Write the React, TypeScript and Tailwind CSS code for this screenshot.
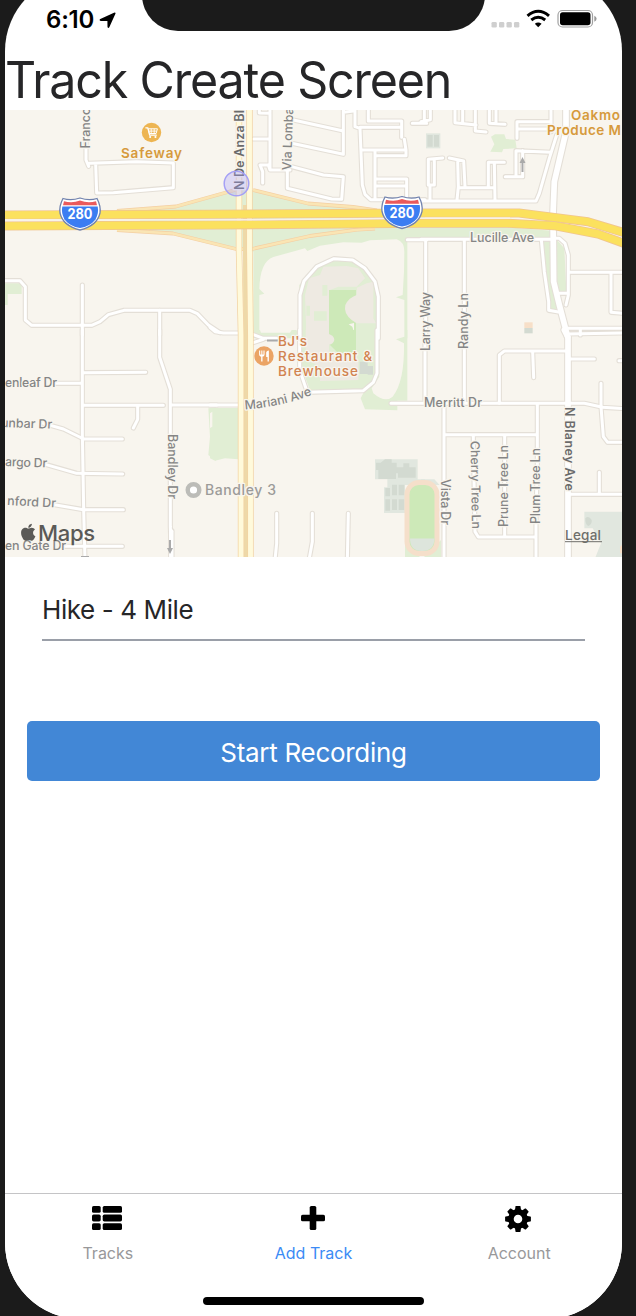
import React from "react";
import { FaApple } from "react-icons/fa";
import { MdRestaurant } from "react-icons/md";

type Shape = { t: keyof typeof TILES; d: string; w?: number; c?: string };

/* Map tiles: every shape is given in the units of its own tile. */
const TILES = {
  A: "translate(0 105) scale(0.33333)",
  B: "translate(210 105) scale(0.33333)",
  C: "translate(421 105) scale(0.33333)",
  D: "translate(0 330) scale(0.33333)",
  E: "translate(210 330) scale(0.33333)",
  F: "translate(421 330) scale(0.33333)",
};

const LAND = "#f8f5ee";
const GREEN = "#e1eed4";
const PITCH = "#cde9b8";
const STONE = "#eeeae2";
const COURT = "#e1e7df";
const COURT_DARK = "#d3dad1";

const areas: Shape[] = [
  { t: "A", c: GREEN, d: "M15 535H65V567H23V600H15Z" },
  { t: "A", c: GREEN, d: "M420 318L530 306L650 274V418L520 385L420 376Z" },
  { t: "B", c: GREEN, d: "M0 275L80 255H130L295 296L430 306L500 316H645V400H592V700H130V440L80 432L0 410Z" },
  { t: "B", c: LAND, d: "M148 684V570L163 566L148 552Q150 470 190 456L285 430L292 438L330 422L400 412L455 413L480 406L560 403Q583 410 583 440L582 500L578 570L558 577L583 585V705H500V560L430 465L370 460L320 480L268 540V675L240 684Z" },
  { t: "B", c: GREEN, d: "M268 700V570L282 528L320 485L372 461L428 465L465 490L495 530L507 575V700Z" },
  { t: "B", c: STONE, d: "M288 700V655L285 570L297 520L330 510L340 485L410 483L445 490L465 520L440 545H385L360 555V690Z" },
  { t: "B", c: GREEN, d: "M337 540H352V572H337ZM312 619H350V647H312ZM289 602H300V632H289Z" },
  { t: "B", c: PITCH, d: "M357 555H438V700H357Z" },
  { t: "B", c: STONE, d: "M441 548L470 535L490 530V640L498 655H440L425 645Q400 625 406 600Q416 578 440 570Z" },
  { t: "B", c: LAND, d: "M416 658L432 654V682L427 665Z" },
  { t: "C", c: GREEN, d: "M0 366H250L400 378V397H0Z" },
  { t: "C", c: GREEN, d: "M365 405H390V530L410 610L390 618L370 500Z" },
  { t: "C", c: GREEN, d: "M408 405L430 430L436 558H415L405 520Z" },
  { t: "C", c: GREEN, d: "M210 95L222 88H250L255 102L283 104L287 130L247 132L243 142L208 140L220 118Z" },
  { t: "C", c: COURT, d: "M15 85H58V130H15Z" },
  { t: "C", c: COURT_DARK, d: "M19 90H35V125H19ZM39 90H54V125H39Z" },
  { t: "C", c: "#f7dfc8", d: "M310 652H335V669H310Z" },
  { t: "C", c: COURT_DARK, d: "M310 669H335V685H310Z" },
  { t: "C", c: "#e9e2d9", d: "M440 668H610V690H440Z" },
  { t: "D", c: GREEN, d: "M625 235L648 232V393L625 375L630 320Z" },
  { t: "E", c: GREEN, d: "M0 234H85V388L45 385L15 392L0 385ZM130 0H260V12H130Z" },
  { t: "E", c: LAND, d: "M150 0H245L240 8H153ZM0 250L7 245V290L0 294Z" },
  { t: "E", c: GREEN, d: "M269 0H592V212H562V241L465 238L452 205L465 180H300L269 100Z" },
  { t: "E", c: STONE, d: "M287 0H357V65L400 70L445 90V150L330 153V108L287 90Z" },
  { t: "E", c: PITCH, d: "M357 0H438V70H385L357 42Z" },
  { t: "E", c: STONE, d: "M357 12Q373 18 373 30Q370 42 357 44Z" },
  { t: "E", c: COURT_DARK, d: "M449 95H473V132H449ZM473 108H489V134H473Z" },
  { t: "E", c: LAND, d: "M507 0H583V20L558 28L582 40Q584 155 548 200Q525 220 490 190L485 175L508 140Z" },
  { t: "E", c: COURT, d: "M495 388H623V448H645V465H585V549H522V472H532V448H495Z" },
  { t: "E", c: COURT_DARK, d: "M498 398H512L525 388H545V398H560V412H580V400H598V412H617V443H564V430H558V447H505V420H498ZM526 474H540V499H526ZM546 464H561V496H546ZM566 464H583V496H566ZM526 508H540V542H526ZM546 508H561V540H546ZM566 508H583V540H566Z" },
  { t: "E", c: GREEN, d: "M585 640L640 690H585Z" },
  { t: "F", c: COURT, d: "M0 448H40L56 465H0ZM490 545H610V690H520L540 640L515 595H490Z" },
  { t: "F", c: COURT_DARK, d: "M493 565Q503 555 512 570Q514 582 502 588Q492 584 493 565Z" },
  { t: "F", c: "#f7dfc8", d: "M597 650L610 640V670H597Z" },
  { t: "F", c: GREEN, d: "M0 690L60 630V690Z" },
];

const roads: Shape[] = [
  { t: "A", d: "M258 15V165L266 184M268 175L410 170L520 174V248L340 263L290 264L287 177" },
  { t: "A", d: "M0 527H60L76 545V645L95 661H275L300 650L325 629L372 616H570L592 626L625 660L660 683" },
  { t: "A", d: "M247 540V690M479 616V690" },
  { t: "D", d: "M247 0V310L251 540L255 690M251 128L437 127M165 160H247M251 226H490M413 226V268L400 294" },
  { t: "D", d: "M130 280L190 297L251 327H367M125 400L230 430L368 432M150 522L250 539H370M185 649H367" },
  { t: "D", d: "M479 0V82L511 178V590L514 690M511 225H650" },
  { t: "D", w: 13, d: "M514 604V690" },
  { t: "E", d: "M0 225H90" },
  { t: "B", d: "M0 667L15 680L40 684H90M180 15V190M148 15V24L180 25M130 102H180M240 195H180L175 180H150L158 200V234" },
  { t: "B", d: "M232 195V250L365 282L395 283L400 215L340 210L245 185M240 43L400 78M245 115L400 148V15M400 22L430 18" },
  { t: "B", d: "M435 15V65L450 70L457 240L465 268L482 284H645M450 67H575M475 15V48H575V97M455 135H588L583 103M588 135V152H495M495 140V280M495 222H590V284M495 243H590M607 55H650" },
  { t: "B", d: "M592 404H650M270 700V570L282 528L320 485L372 461L428 465L465 490L495 530L505 575V700" },
  { t: "E", d: "M269 0V120L292 187L460 182L490 157L501 130V0M130 14L160 25H200M130 38L160 28" },
  { t: "C", d: "M0 50L28 44V15M10 15V44M102 15V53L165 60M125 15V53M163 15V78L195 81M205 15V55L252 58M225 15V55M288 100V50H390M288 72H390M390 15V80" },
  { t: "C", d: "M407 90L385 160L365 230L355 265L345 288H0M285 215V137L390 142M305 137V215H253M27 285V240M22 163V240H40V165M22 163L65 159M85 159L128 168L132 245M110 165L112 245L108 285M112 248H220M222 285L220 172M202 245V172H250" },
  { t: "C", d: "M0 403H400M14 404V700M130 404V700M361 404L370 500L383 590V616L412 621M400 400H415L432 415L442 450V570L435 600M415 565H440M442 502H610M570 502V622L610 625M440 670H610M478 670V690" },
  { t: "F", d: "M12 0V215M130 0V215M235 220V75L250 63H435M335 65L338 143M440 87H520M594 92H610M540 160V230L547 320L560 337H610" },
  { t: "F", d: "M-90 220H490L545 232L610 236M349 222V400L345 560V690M69 230V690M69 314H349M157 314V340L162 605L172 621H345M251 314V620M448 493H610M535 427V493M440 12L610 9" },
  { t: "E", d: "M200 550V640L195 690M307 550V635L297 690M415 550L412 690" },
  { t: "C", w: 17, d: "M435 15V80L400 230L396 330L398 530L415 600L440 695" },
  { t: "F", w: 17, d: "M430 0L441 22V690" },
];

type Label = { s: string; x: number; y: number; len: number; r?: number; size?: number; c?: string; wt?: number };

const labels: Label[] = [
  { s: "Franco", x: 89.5, y: 148.5, len: 41, r: -90 },
  { s: "Via Lomba", x: 291, y: 170.5, len: 63, r: -88 },
  { s: "N De Anza Bl", x: 244, y: 190, len: 80, r: -90, wt: 600, c: "#6b6b6b" },
  { s: "Lucille Ave", x: 470, y: 242, len: 64 },
  { s: "Larry Way", x: 429.5, y: 351, len: 59, r: -90 },
  { s: "Randy Ln", x: 468, y: 349, len: 56, r: -90 },
  { s: "Merritt Dr", x: 424, y: 407, len: 58 },
  { s: "Bandley Dr", x: 167.5, y: 434, len: 65, r: 90 },
  { s: "Vista Dr", x: 440.5, y: 479, len: 46, r: 90 },
  { s: "Cherry Tree Ln", x: 470.5, y: 441, len: 88, r: 89 },
  { s: "Prune Tree Ln", x: 508, y: 527, len: 82, r: -90 },
  { s: "Plum Tree Ln", x: 540, y: 524, len: 76, r: -90 },
  { s: "N Blaney Ave", x: 565, y: 407, len: 84, r: 90, wt: 600, c: "#6b6b6b" },
  { s: "enleaf Dr", x: 5, y: 387, len: 52 },
  { s: "unbar Dr", x: 1, y: 427, len: 51, r: 2 },
  { s: "argo Dr", x: 5, y: 466, len: 42, r: 2 },
  { s: "nford Dr", x: 7, y: 505, len: 49, r: 3 },
  { s: "en Gate Dr", x: 5, y: 549.5, len: 61 },
  { s: "Bandley 3", x: 205, y: 495, len: 71, size: 14, wt: 500, c: "#9c9b99" },
  { s: "Safeway", x: 121, y: 158, len: 61, size: 13.5, wt: 600, c: "#d69a3c" },
  { s: "Oakmo", x: 571, y: 120, len: 49, size: 13.5, wt: 600, c: "#d69a3c" },
  { s: "Produce M", x: 547, y: 135, len: 74, size: 13.5, wt: 600, c: "#d69a3c" },
  { s: "BJ's", x: 278, y: 346, len: 29, size: 13.5, wt: 500, c: "#d18350" },
  { s: "Restaurant &", x: 278, y: 361, len: 94, size: 13.5, wt: 500, c: "#d18350" },
  { s: "Brewhouse", x: 278, y: 376, len: 80, size: 13.5, wt: 500, c: "#d18350" },
];

function Shield({ x, y }: { x: number; y: number }) {
  return (
    <g transform={`translate(${x} ${y})`}>
      <path d="M-17 -15.5Q-9 -13 0 -16Q9 -13 17 -15.5Q21 -8 20 -1Q17 12 0 16Q-17 12 -20 -1Q-21 -8 -17 -15.5Z" fill="#fff" stroke="#7283ae" strokeWidth="1.3" />
      <path d="M-16 -12.8Q-8 -10.500 0 -13.400Q8 -10.500 16 -12.800L17 -8.800H-17Z" fill="#ea5a5c" />
      <path d="M-17.700 -7.500H17.700Q19 -1 15.500 5.500Q10 12.500 0 14Q-10 12.500 -15.500 5.500Q-19 -1 -17.700 -7.500Z" fill="#3b7df2" />
      <text x="0" y="5.200" textAnchor="middle" textLength="25" lengthAdjust="spacingAndGlyphs" fontSize="14.500" fontWeight="700" fill="#fff">280</text>
    </g>
  );
}

function MapView() {
  const upper = "M0 215L210 214.300L421 213H519L588 221.700L630 234.500";
  const lower = "M0 226L210 225L421 223.300H508L554 225.700L598 234L630 245.500";
  const ramps = "M117 211L176 206.500L235 190M253 190L308 203.500L353 207L377 210.500M117 230L173 233.500L236 249H252L310 236L357 229.700L375 228.500";
  return (
    <svg viewBox="5 110 617 447" className="block h-[447px] w-[617px] shrink-0" fontFamily="Inter, sans-serif">
      <rect x="5" y="110" width="617" height="447" fill={LAND} />
      {areas.map((a, i) => <path key={i} transform={TILES[a.t]} d={a.d} fill={a.c} />)}
      <rect x="407" y="482.500" width="30" height="71" rx="12" fill={PITCH} stroke="#f5dfca" strokeWidth="5" />
      <path d="M410 538.500H434.500Q434 551 422 551Q410 551 410 538.500Z" fill="#dde5dc" />
      <g fill="none" strokeLinecap="round" strokeLinejoin="round">
        {roads.map((r, i) => <path key={i} transform={TILES[r.t]} d={r.d} stroke="#e4dfd7" strokeWidth={(r.w ?? 9) + 6.5} />)}
        {roads.map((r, i) => <path key={i} transform={TILES[r.t]} d={r.d} stroke="#fff" strokeWidth={r.w ?? 9} />)}
      </g>
      <g fill="none" strokeLinejoin="round">
        <path d={ramps} stroke="#f4cfa3" strokeWidth="3.800" />
        <path d={ramps} stroke="#fae5b4" strokeWidth="2.500" />
        <path d="M245.500 205V250L246.500 557" stroke="#eed9a8" strokeWidth="5" />
        <path d="M239 110V250L241 335V557M249.500 110V250L250.500 335V557" stroke="#f2d3a4" strokeWidth="6.400" />
        <path d="M239 110V250L241 335V557M249.500 110V250L250.500 335V557" stroke="#fffadb" strokeWidth="4.900" />
        <path d={upper} stroke="#f0c58f" strokeWidth="9" />
        <path d={lower} stroke="#f0c58f" strokeWidth="9" />
        <path d={upper} stroke="#fbe15e" strokeWidth="7.400" />
        <path d={lower} stroke="#fbe15e" strokeWidth="7.400" />
        <path d="M245 219.800H5M245 219.800L421 218.300H510" stroke="#f8f1e6" strokeWidth="1.600" />
      </g>
      <g fill="none" stroke="#aaa" strokeWidth="2">
        <path d="M522.500 172V162M170 540V549M267 340.500H278" />
        <path d="M519.500 163L522.500 157L525.500 163ZM167 548L170 554L173 548Z" fill="#aaa" stroke="none" />
        <path d="M81 556.500H89" strokeWidth="1" />
      </g>
      <circle cx="151.500" cy="132.500" r="9.700" fill="#edb552" />
      <g fill="none" stroke="#fff">
        <path d="M145.800 127.800H147.800L149.600 135.200H156.300" strokeWidth="1.200" strokeLinecap="round" />
        <path d="M148.200 128.800H157.400L156.100 133.500H149.300Z" strokeWidth="1" />
        <path d="M148.700 131.100H156.700M151.200 128.800V133.500M154.200 128.800V133.500" strokeWidth="0.900" />
        <path d="M150.100 136.900H150.200M155.400 136.900H155.500" strokeWidth="2" strokeLinecap="round" />
      </g>
      <circle cx="264" cy="356" r="9.700" fill="#eba465" />
      <MdRestaurant x={257.500} y={349.500} size={13} color="#fff" />
      <circle cx="193.500" cy="490" r="5.800" fill="#fff" stroke="#bcbcb8" strokeWidth="4.400" />
      <g stroke={LAND} strokeWidth="2.500" paintOrder="stroke" strokeLinejoin="round">
        {labels.map((l) => (
          <text
            key={l.s}
            transform={`translate(${l.x} ${l.y}) rotate(${l.r ?? 0})`}
            textLength={l.len}
            fontSize={l.size ?? 12.500}
            fontWeight={l.wt ?? 450}
            fill={l.c ?? "#858585"}
          >
            {l.s}
          </text>
        ))}
        <path id="mariani" d="M245 409.500Q281 407 314 394" fill="none" stroke="none" />
        <text fontSize="12.500" fontWeight="450" fill="#858585">
          <textPath href="#mariani" textLength="69">Mariani Ave</textPath>
        </text>
      </g>
      <circle cx="236.500" cy="183.500" r="12.300" fill="#a6a0ff" fillOpacity="0.330" stroke="#a5a0f5" strokeWidth="1.500" />
      <Shield x={80} y={214} />
      <Shield x={402} y={212.500} />
      <FaApple x={18.500} y={522.500} size={19.500} color="#5b5a57" />
      <text x="38" y="541" textLength="57" fontSize="22" fontWeight="500" fill="#5b5a57">Maps</text>
      <text x="565" y="540" textLength="36" fontSize="13.500" fontWeight="500" fill="#6f6e6b">Legal</text>
      <path d="M565 541.700H602" stroke="#6f6e6b" strokeWidth="1" />
    </svg>
  );
}

function StatusIcons() {
  return (
    <svg viewBox="490 6 108 24" className="h-6 w-[108px]">
      {[491.500, 499, 506.500, 514].map((x) => <rect key={x} x={x} y="22" width="5.300" height="5.500" rx="1.300" fill="#cfcfcf" />)}
      <g fill="none" stroke="#000" strokeWidth="3">
        <path d="M527.500 15.800Q538.200 6.700 549 15.800" />
        <path d="M531.300 20Q538.200 14.500 545.200 20" />
      </g>
      <path d="M538.200 27.300L534.800 23.800Q538.200 21.200 541.600 23.800Z" />
      <rect x="558" y="10.500" width="34.500" height="16.500" rx="4.500" fill="none" stroke="#a0a0a0" strokeWidth="1.200" />
      <rect x="560" y="12.300" width="30.500" height="13" rx="2.700" />
      <path d="M594.300 15.800Q596.600 16.700 596.600 18.800Q596.600 21 594.300 21.800Z" fill="#999" />
    </svg>
  );
}

function ListIcon() {
  return (
    <svg viewBox="0 0 30 24" className="h-6 w-[30px]">
      {[0, 8.600, 17.200].map((y) => (
        <g key={y}>
          <rect y={y} width="8.700" height="6.800" rx="1.600" />
          <rect x="10.700" y={y} width="19.300" height="6.800" rx="1.600" />
        </g>
      ))}
    </svg>
  );
}

function PlusIcon() {
  return (
    <svg viewBox="0 0 24 24" className="h-6 w-6">
      <rect x="8.700" width="6.600" height="24" rx="1.600" />
      <rect y="8.700" width="24" height="6.600" rx="1.600" />
    </svg>
  );
}

function GearIcon() {
  return (
    <svg viewBox="-13 -13 26 26" className="h-[26px] w-[26px]">
      <circle r="7.100" fill="none" stroke="#000" strokeWidth="5.600" />
      {[0, 45, 90, 135, 180, 225, 270, 315].map((a) => (
        <path key={a} transform={`rotate(${a})`} d="M-3.200 -8L-2.500 -12.400Q-2.300 -12.900 -1.800 -12.900H1.800Q2.300 -12.900 2.500 -12.400L3.200 -8Z" />
      ))}
    </svg>
  );
}

function Tab({ icon, label, active }: { icon: React.ReactNode; label: string; active?: boolean }) {
  return (
    <div className="flex flex-1 flex-col items-center pt-3">
      <div className="flex h-[27px] items-start pr-0.5">{icon}</div>
      <span className={`mt-2 text-[16px] leading-6 ${active ? "text-[#3b8bf5]" : "text-[#98989a]"}`}>{label}</span>
    </div>
  );
}

export default function App() {
  return (
    <div className="h-[1316px] w-[636px] overflow-hidden bg-[#1b1b1b] pl-[5px] font-[Inter,sans-serif]">
      <div className="-mt-[25px] flex h-[1344px] w-[617px] flex-col overflow-hidden rounded-[76px] bg-white">
        <header className="flex h-[75px] shrink-0 items-start">
          <div className="flex w-[137px] items-center pt-[33px] pl-[41px]">
            <span className="text-[24px] leading-6 font-semibold tracking-[-0.2px] text-black">6:10</span>
            <svg viewBox="0 0 17 17" className="ml-[5px] h-[17px] w-[17px]">
              <path d="M15 0.700Q17.100 0 16.300 2.100L10.300 15.300Q9.200 17 8.500 15L8.400 9.100L1.800 8.900Q-0.400 8.300 1.300 6.900Z" />
            </svg>
          </div>
          <div className="h-[56px] w-[343px] rounded-b-[36px] bg-[#1b1b1b]" />
          <div className="pt-[31px] pl-[5px]">
            <StatusIcons />
          </div>
        </header>
        <h1 className="h-[60px] shrink-0 origin-left scale-x-[0.967] text-[50px] leading-[60px] tracking-[-1.2px] whitespace-nowrap text-[#262628]">Track Create Screen</h1>
        <MapView />
        <div className="mx-[37px] mt-[30px] flex h-[54px] shrink-0 items-start border-b-2 border-[#9a9fa8] text-[26px] leading-[46px] tracking-[-0.4px] text-[#262628]">
          Hike - 4 Mile
        </div>
        <button className="mx-[22px] mt-[80px] h-[60px] shrink-0 rounded-[5px] bg-[#4287d6] pt-[3px] text-[26px] tracking-[-0.3px] text-white">Start Recording</button>
        <nav className="mt-auto flex h-[126px] shrink-0 flex-col border-t border-[#c4c4c6] bg-white">
          <div className="flex h-[103px] shrink-0">
            <Tab icon={<ListIcon />} label="Tracks" />
            <Tab icon={<PlusIcon />} label="Add Track" active />
            <Tab icon={<GearIcon />} label="Account" />
          </div>
          <div className="mx-auto h-[8px] w-[221px] shrink-0 rounded-full bg-black" />
        </nav>
      </div>
    </div>
  );
}
